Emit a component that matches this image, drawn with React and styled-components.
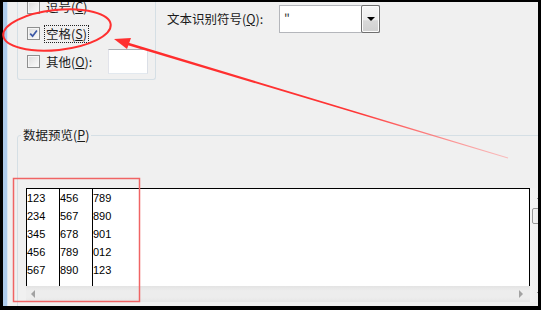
import React from "react";
import styled, { createGlobalStyle } from "styled-components";

const GlobalStyle = createGlobalStyle`
  html, body {
    margin: 0;
    padding: 0;
    background: #000;
  }
  body {
    font-family: "Noto Sans CJK SC", "Noto Sans", sans-serif;
  }
`;

const rows = [
  ["123", "456", "789"],
  ["234", "567", "890"],
  ["345", "678", "901"],
  ["456", "789", "012"],
  ["567", "890", "123"],
];

function Checkbox({ checked }) {
  return (
    <Box>
      {checked && (
        <svg width="9" height="9" viewBox="0 0 9 9">
          <path
            d="M1.2 4.6 L3.6 7.2 L7.9 1.4"
            fill="none"
            stroke="#3c58a6"
            strokeWidth="1.7"
          />
        </svg>
      )}
    </Box>
  );
}

function App() {
  const cols = [0, 1, 2];
  return (
    <>
      <GlobalStyle />
      <Screen>
        <WindowEdge />
        <Dialog>
          <TopRow>
            <DelimGroup>
              <CheckRow $h={26}>
                <Checkbox />
                <CheckLabel>
                  逗号(<Key>C</Key>)
                </CheckLabel>
              </CheckRow>
              <CheckRow $h={27}>
                <Checkbox checked />
                <CheckLabel $focus>
                  空格(<Key>S</Key>)
                </CheckLabel>
              </CheckRow>
              <CheckRow $h={29}>
                <Checkbox />
                <CheckLabel>
                  其他(<Key>O</Key>):
                </CheckLabel>
                <OtherInput />
              </CheckRow>
            </DelimGroup>

            <QualifierField>
              <QualifierLabel>
                文本识别符号(<Key>Q</Key>):
              </QualifierLabel>
              <Combo>
                <ComboText>"</ComboText>
                <DropButton>
                  <DownTriangle />
                </DropButton>
              </Combo>
            </QualifierField>
          </TopRow>

          <PreviewGroup>
            <Legend>
              数据预览(<Key>P</Key>)
            </Legend>
            <PreviewBox>
              <DataPane>
                <Grid>
                  {cols.map((c) => (
                    <Column key={c} $divider={c < 2}>
                      {rows.map((r, i) => (
                        <Cell key={i}>{r[c]}</Cell>
                      ))}
                    </Column>
                  ))}
                </Grid>
                <HScroll>
                  <ArrowLeft />
                  <ArrowRight />
                </HScroll>
              </DataPane>
              <VScroll>
                <VButton>
                  <ArrowUp />
                </VButton>
                <Thumb />
                <VSpacer />
                <VButton>
                  <ArrowDown />
                </VButton>
              </VScroll>
            </PreviewBox>
          </PreviewGroup>
        </Dialog>

        <Annotations width="541" height="310" viewBox="0 0 541 310">
          <defs>
            <linearGradient
              id="fade"
              gradientUnits="userSpaceOnUse"
              x1="125"
              y1="43"
              x2="508"
              y2="158"
            >
              <stop offset="0" stopColor="#ff2b2b" />
              <stop offset="0.6" stopColor="#ff3535" />
              <stop offset="1" stopColor="#ff9a9a" stopOpacity="0.6" />
            </linearGradient>
          </defs>
          <ellipse
            cx="57"
            cy="30"
            rx="54"
            ry="20"
            transform="rotate(-6 57 30)"
            fill="none"
            stroke="#ff3030"
            strokeWidth="2"
          />
          <polygon
            points="124.6,44.3 125.4,41.7 508.1,157.6 507.9,158.4"
            fill="url(#fade)"
          />
          <polygon points="114,39 131,38 127,49" fill="#ff3030" />
          <rect
            x="13.5"
            y="178.5"
            width="126"
            height="123"
            fill="none"
            stroke="#f06464"
            strokeWidth="1.5"
          />
        </Annotations>
      </Screen>
    </>
  );
}

const Screen = styled.div`
  position: relative;
  width: 541px;
  height: 310px;
  box-sizing: border-box;
  padding: 2px 3px 4px 3px;
  background: #000;
  display: flex;
`;

const WindowEdge = styled.div`
  width: 4px;
  flex-shrink: 0;
  background: #aecbeb;
  border-right: 1px solid #dbe7f4;
`;

const Dialog = styled.div`
  flex: 1;
  min-width: 0;
  background: #f0f0f0;
  overflow: hidden;
  display: flex;
  flex-direction: column;
  color: #1b1b1b;
  font-size: 12.5px;
`;

/* top: delimiter options + text qualifier */
const TopRow = styled.div`
  display: flex;
  align-items: flex-start;
  height: 78px;
  flex-shrink: 0;
`;

const DelimGroup = styled.div`
  box-sizing: border-box;
  width: 139px;
  margin: -8px 0 0 9px;
  padding: 0 7px 3px 9px;
  border: 1px solid #d5dfe5;
  border-top: none;
  border-radius: 0 0 3px 3px;
`;

const CheckRow = styled.div`
  display: flex;
  align-items: center;
  height: ${(p) => p.$h}px;
`;

const Box = styled.span`
  box-sizing: border-box;
  width: 13px;
  height: 13px;
  flex-shrink: 0;
  display: flex;
  align-items: center;
  justify-content: center;
  border: 1px solid #8e8f8f;
  background: linear-gradient(135deg, #dcdcdc 0%, #f0f0f0 60%, #fbfbfb 100%);
  box-shadow: inset 0 0 0 1px #f6f6f6;
`;

const CheckLabel = styled.span`
  margin-left: 4px;
  padding: 0 1px;
  line-height: 16px;
  border: 1px ${(p) => (p.$focus ? "dotted #222" : "solid transparent")};
  white-space: nowrap;
`;

const Key = styled.span`
  text-decoration: underline;
  text-underline-offset: 1px;
`;

const OtherInput = styled.div`
  box-sizing: border-box;
  margin-left: auto;
  width: 40px;
  height: 25px;
  background: #fff;
  border: 1px solid;
  border-color: #abadb3 #dbdfe6 #e3e9ef #e2e3ea;
`;

const QualifierField = styled.div`
  display: flex;
  align-items: center;
  margin: 3px 0 0 11px;
  height: 28px;
`;

const QualifierLabel = styled.span`
  width: 112px;
  white-space: nowrap;
  line-height: 16px;
`;

const Combo = styled.div`
  box-sizing: border-box;
  width: 101px;
  height: 28px;
  display: flex;
  background: #fff;
  border: 1px solid #b4b6bb;
`;

const ComboText = styled.span`
  flex: 1;
  padding: 4px 0 0 4px;
  line-height: 16px;
  color: #333;
`;

const DropButton = styled.div`
  box-sizing: border-box;
  width: 19px;
  margin: -1px -1px -1px 0;
  display: flex;
  align-items: center;
  justify-content: center;
  border: 1px solid #6f6f6f;
  border-radius: 2px;
  background: linear-gradient(
    #f6f6f6 0%,
    #ececec 55%,
    #d9d9d9 56%,
    #d0d0d0 100%
  );
  box-shadow: inset 0 0 0 1px #fcfcfc;
`;

const DownTriangle = styled.span`
  width: 0;
  height: 0;
  border-left: 4px solid transparent;
  border-right: 4px solid transparent;
  border-top: 4px solid #000;
`;

/* bottom: data preview */
const PreviewGroup = styled.fieldset`
  box-sizing: border-box;
  width: 540px;
  min-width: 0;
  margin: 47px 0 0 9px;
  padding: 0 0 12px 0;
  border: 1px solid #d5dfe5;
  border-radius: 3px;
`;

const Legend = styled.legend`
  margin-left: 3px;
  padding: 0 2px;
  line-height: 16px;
  font-size: 12.5px;
  color: #1b1b1b;
`;

const PreviewBox = styled.div`
  display: flex;
  margin: 45px 0 0 8px;
  height: 114px;
`;

const DataPane = styled.div`
  width: 504px;
  flex-shrink: 0;
  display: flex;
  flex-direction: column;
  background: #fff;
`;

const Grid = styled.div`
  flex: 1;
  display: flex;
  border: 1px solid #000;
  border-bottom: none;
`;

const Column = styled.div`
  box-sizing: border-box;
  width: 33px;
  border-right: 1px solid ${(p) => (p.$divider ? "#000" : "transparent")};
  ${(p) => (p.$divider ? "" : "width: 32px;")}
`;

const Cell = styled.div`
  font-family: "Liberation Sans", Arial, sans-serif;
  font-size: 11px;
  line-height: 18px;
  color: #000;
`;

const HScroll = styled.div`
  height: 16px;
  flex-shrink: 0;
  display: flex;
  align-items: center;
  justify-content: space-between;
  padding: 0 7px 0 5px;
  background: linear-gradient(#e3e3e3, #ededed 30%, #ededed 70%, #e6e6e6);
`;

const ArrowLeft = styled.span`
  width: 0;
  height: 0;
  border-top: 4px solid transparent;
  border-bottom: 4px solid transparent;
  border-right: 4px solid #a2a2a2;
`;

const ArrowRight = styled.span`
  width: 0;
  height: 0;
  border-top: 4px solid transparent;
  border-bottom: 4px solid transparent;
  border-left: 4px solid #a2a2a2;
`;

const VScroll = styled.div`
  width: 17px;
  flex-shrink: 0;
  display: flex;
  flex-direction: column;
  align-items: center;
  background: linear-gradient(90deg, #f4f4f4, #ebebeb);
`;

const VButton = styled.div`
  height: 17px;
  display: flex;
  align-items: center;
  justify-content: center;
`;

const ArrowUp = styled.span`
  width: 0;
  height: 0;
  margin-left: 4px;
  border-left: 4px solid transparent;
  border-right: 4px solid transparent;
  border-bottom: 4px solid #333;
`;

const ArrowDown = styled.span`
  width: 0;
  height: 0;
  margin-left: 4px;
  border-left: 4px solid transparent;
  border-right: 4px solid transparent;
  border-top: 4px solid #333;
`;

const Thumb = styled.div`
  box-sizing: border-box;
  width: 15px;
  height: 16px;
  margin: 3px 0 0 1px;
  border: 1px solid #979797;
  border-radius: 2px;
  background: linear-gradient(90deg, #f3f3f3, #e2e2e2);
`;

const VSpacer = styled.div`
  flex: 1;
`;

const Annotations = styled.svg`
  position: absolute;
  left: 0;
  top: 0;
  pointer-events: none;
`;

export default App;
